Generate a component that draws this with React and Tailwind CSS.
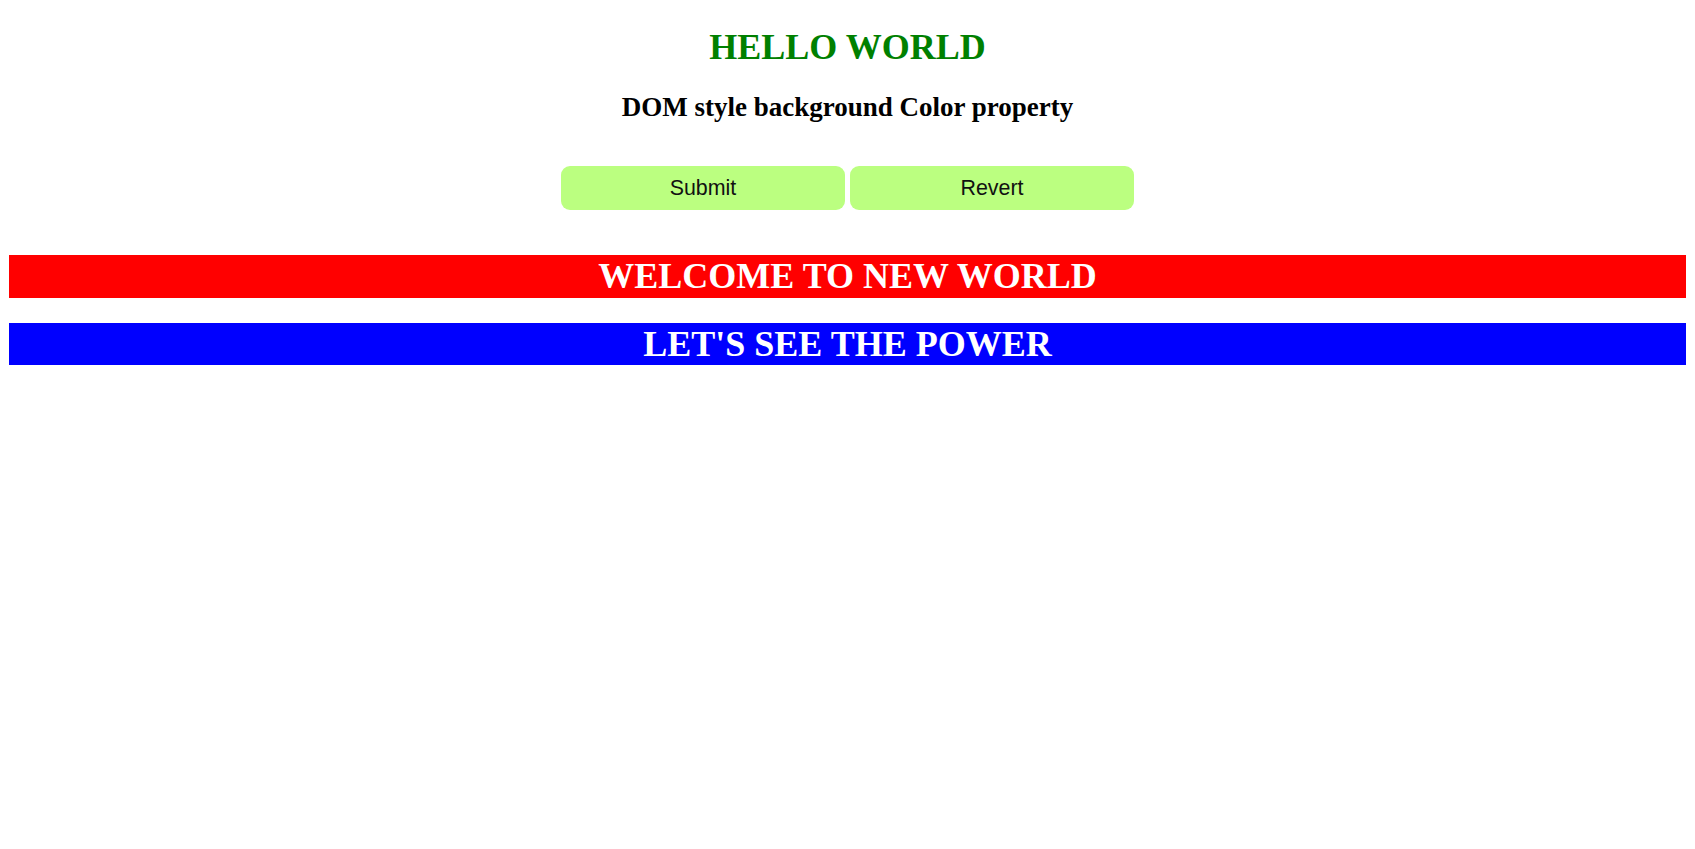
export default function App() {
  return (
    <div className="min-h-screen bg-white px-[9px] pt-[27px] text-center font-['Liberation_Serif','Times_New_Roman',serif]">
      <h1 className="text-[36px] font-bold leading-[41.4px] text-[#008000]">HELLO WORLD</h1>
      <h2 className="mt-[24px] text-[27px] font-bold leading-[31px] text-black">
        DOM style background Color property
      </h2>
      <div className="mt-[43px] flex justify-center gap-[5px] font-['Liberation_Sans',Arial,sans-serif]">
        <button className="h-[44px] w-[284px] rounded-[9px] bg-[#bbff80] text-[21.4px] leading-[24.6px] text-[#111]">
          Submit
        </button>
        <button className="h-[44px] w-[284px] rounded-[9px] bg-[#bbff80] text-[21.4px] leading-[24.6px] text-[#111]">
          Revert
        </button>
      </div>
      <h1 className="mt-[45px] h-[42.5px] bg-[#ff0000] text-[36px] font-bold leading-[43px] text-white">
        WELCOME TO NEW WORLD
      </h1>
      <h1 className="mt-[25px] h-[42.5px] bg-[#0000ff] text-[36px] font-bold leading-[43px] text-white">
        LET'S SEE THE POWER
      </h1>
    </div>
  );
}
